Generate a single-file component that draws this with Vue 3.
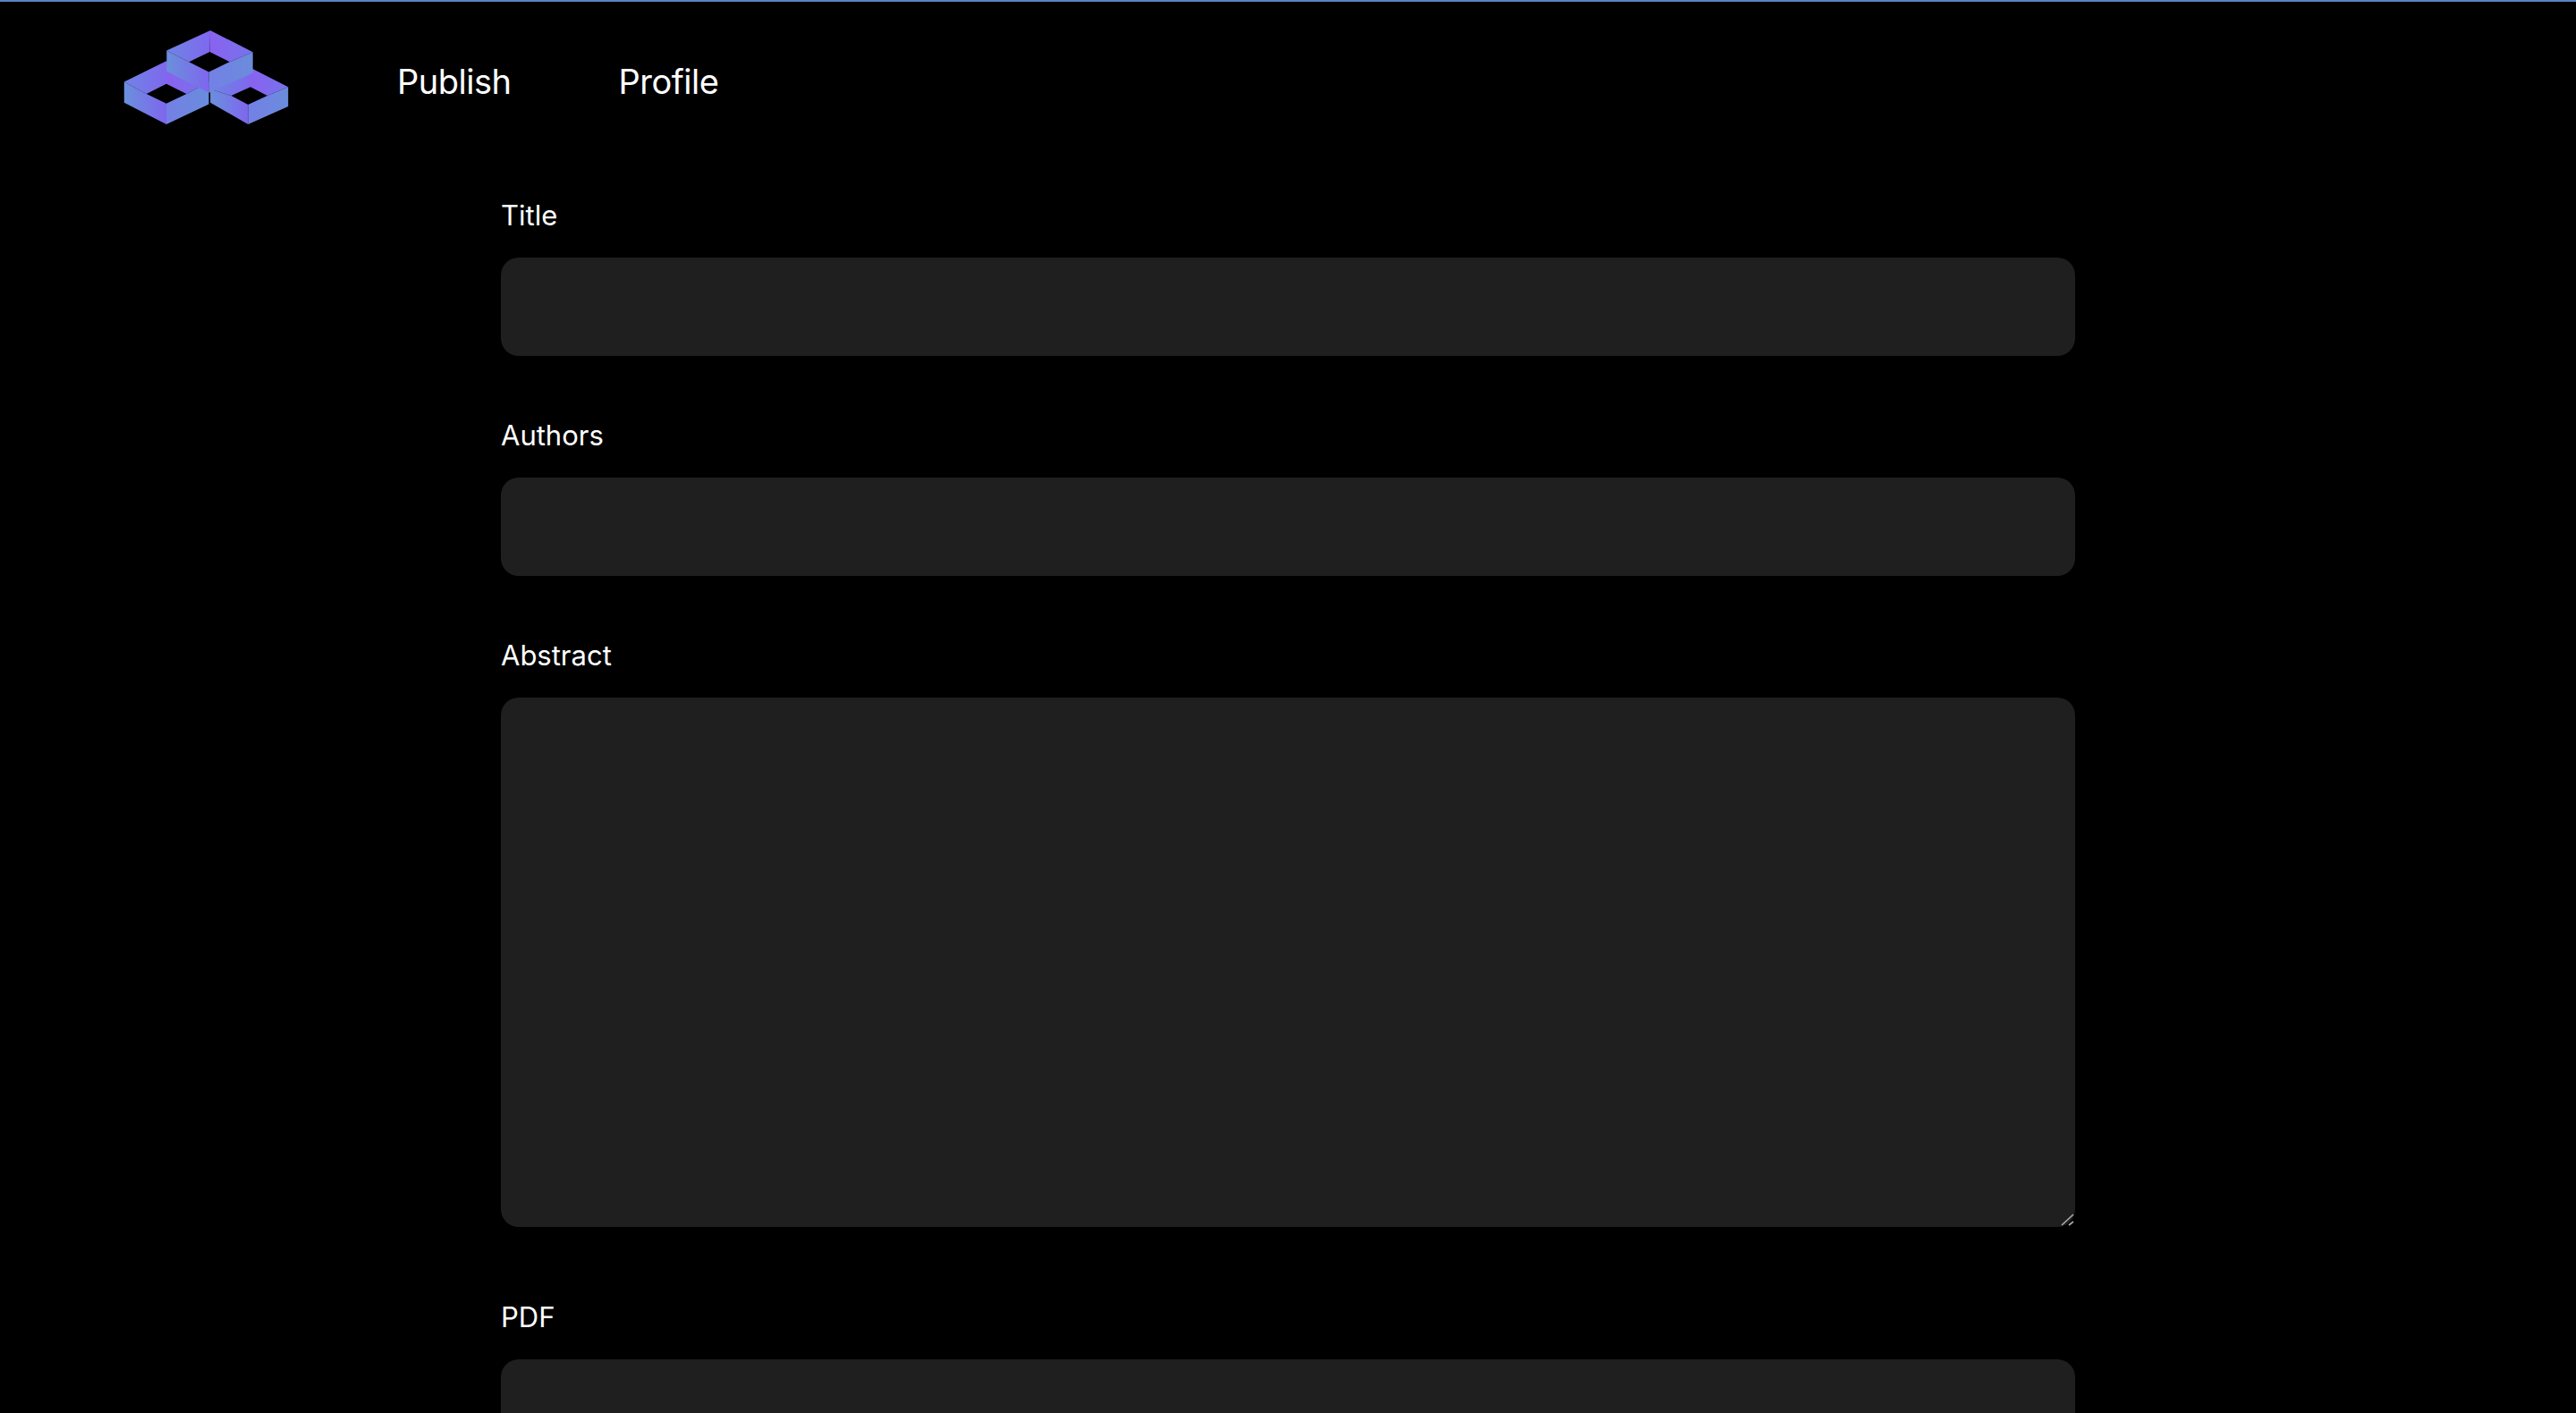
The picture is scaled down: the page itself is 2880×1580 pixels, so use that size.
<script setup>
const links = ['Publish', 'Profile']

// Each cube: outer hexagon and inner diamond, in the logo's viewBox units.
const cube = (L, T, R, R2, B, L2, t, r, b, l) => [
  { points: [L, T, t, l], fill: 'url(#faceTL)' },
  { points: [T, R, r, t], fill: 'url(#faceTR)' },
  { points: [L, l, b, B, L2], fill: 'url(#faceLL)' },
  { points: [b, r, R, R2, B], fill: 'url(#faceLR)' },
]

const faces = [
  ...cube('55,275', '197,205', '340,275', '340,350', '197,418', '55,345', '197,282', '265,316', '197,348', '130,316'),
  ...cube('345,300', '480,228', '607,292', '607,358', '472,418', '345,345', '480,292', '537,322', '472,352', '415,322'),
  ...cube('198,170', '345,102', '488,175', '488,245', '340,312', '198,240', '343,174', '410,208', '340,242', '273,208'),
].map((f) => ({ d: f.points.join(' '), fill: f.fill }))
</script>

<template>
  <div class="page">
    <header class="header">
      <svg class="logo" viewBox="54 102 554 316" aria-label="Logo">
        <defs>
          <linearGradient id="faceTL" x1="0" y1="0" x2="1" y2="0">
            <stop offset="0" stop-color="#6f84e4" />
            <stop offset="1" stop-color="#7f68ee" />
          </linearGradient>
          <linearGradient id="faceTR" x1="0" y1="0" x2="1" y2="0">
            <stop offset="0" stop-color="#8962f0" />
            <stop offset="1" stop-color="#7673ea" />
          </linearGradient>
          <linearGradient id="faceLL" x1="0" y1="0" x2="1" y2="0">
            <stop offset="0" stop-color="#6a90dc" />
            <stop offset="1" stop-color="#7f66ee" />
          </linearGradient>
          <linearGradient id="faceLR" x1="0" y1="0" x2="1" y2="0">
            <stop offset="0" stop-color="#7480e6" />
            <stop offset="1" stop-color="#6a8cdc" />
          </linearGradient>
        </defs>
        <polygon v-for="(face, i) in faces" :key="i" :points="face.d" :fill="face.fill" />
      </svg>
      <nav class="nav">
        <a v-for="link in links" :key="link" class="nav-link">{{ link }}</a>
      </nav>
    </header>

    <form class="form">
      <label class="field">
        <span class="label">Title</span>
        <input class="control" type="text" />
      </label>
      <label class="field">
        <span class="label">Authors</span>
        <input class="control" type="text" />
      </label>
      <label class="field field-wide">
        <span class="label">Abstract</span>
        <span class="area-wrap">
          <textarea class="control area"></textarea>
          <svg class="grip" viewBox="0 0 30 30" aria-hidden="true">
            <path d="M15 28 28 16M23 28 28 24" fill="none" stroke="#a8a8a8" stroke-width="1.7" />
          </svg>
        </span>
      </label>
      <label class="field">
        <span class="label">PDF</span>
        <input class="control" type="text" />
      </label>
    </form>
  </div>
</template>

<style>
html, body {
  margin: 0;
  background: #000;
  overflow: hidden;
}
</style>

<style scoped>
.page {
  height: 1580px;
  overflow: hidden;
  background: #000;
  color: #fff;
  font-family: Inter, "Liberation Sans", sans-serif;
  border-top: 2px solid #5b82c4;
  box-sizing: border-box;
}
.header {
  display: flex;
  align-items: flex-start;
  height: 216px;
  padding: 32px 0 0 138px;
  box-sizing: border-box;
}
.logo {
  width: 185px;
  height: 105px;
  flex: none;
}
.nav {
  display: flex;
  gap: 120px;
  margin-left: 121px;
  margin-top: 33px;
}
.nav-link {
  font-size: 38px;
  line-height: 48px;
  letter-spacing: -0.5px;
}
.form {
  width: 1760px;
  margin: 0 auto;
  display: flex;
  flex-direction: column;
  gap: 66px;
}
.field {
  display: flex;
  flex-direction: column;
  gap: 24px;
}
.field-wide {
  margin-bottom: 12px;
}
.label {
  font-size: 31px;
  line-height: 46px;
}
.control {
  display: block;
  width: 100%;
  height: 110px;
  box-sizing: border-box;
  border: 0;
  outline: 0;
  border-radius: 20px;
  background: #1f1f1f;
  color: #fff;
  font: inherit;
  padding: 0 24px;
  flex: none;
}
.area-wrap {
  position: relative;
  display: block;
}
.area {
  height: 592px;
  padding: 24px;
  resize: vertical;
}
.area::-webkit-resizer {
  background: transparent;
}
.grip {
  position: absolute;
  right: 0;
  bottom: 0;
  width: 30px;
  height: 30px;
  pointer-events: none;
}
</style>
